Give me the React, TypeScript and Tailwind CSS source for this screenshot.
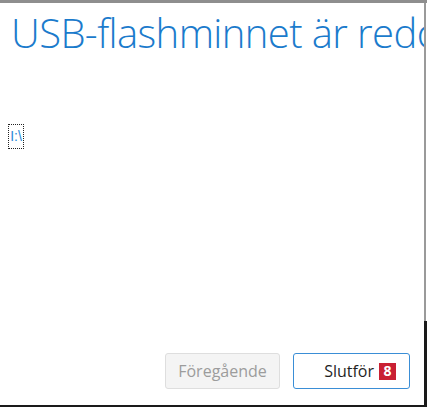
export default function App() {
  const font = { fontFamily: '"Segoe UI", "Open Sans", "Noto Sans", sans-serif' }
  return (
    <div className="w-[427px] h-[407px] bg-white flex flex-col overflow-hidden" style={font}>
      <div className="h-[3px] bg-[#8e8e8e] shrink-0" />
      <div className="flex flex-1 min-h-0">
        <div className="flex-1 min-w-0 flex flex-col overflow-hidden">
          <div className="pl-[11px] pt-[2px] whitespace-nowrap text-[40px] font-light leading-[56px] text-[#1b7bcc] tracking-[-0.6px]">
            USB-flashminnet är redo
          </div>
          <div className="pl-[8px] mt-[62px]">
            <div className="inline-flex items-center justify-center w-[16px] h-[25px] border border-dotted border-[#222] text-[14px] text-[#2a8ad8] leading-none" style={{ fontFamily: '"Liberation Sans", sans-serif' }}>
              I:\
            </div>
          </div>
          <div className="flex-1" />
          <div className="flex justify-end gap-[13px] pr-[14px] pb-[16px]">
            <button className="w-[115px] h-[36px] rounded-[3px] border border-[#dedede] bg-[#f4f4f4] text-[16px] text-[#9c9c9c]">
              Föregående
            </button>
            <button className="w-[117px] h-[36px] rounded-[3px] border-[1.5px] border-[#3a8ed6] bg-white text-[16px] text-[#1f1f1f] flex items-center justify-end pr-[13px] gap-[5px]">
              <span>Slutför</span>
              <span className="w-[17px] h-[17px] bg-[#c92033] text-white text-[14px] font-bold leading-none flex items-center justify-center">8</span>
            </button>
          </div>
        </div>
        <div className="w-[3px] shrink-0 flex flex-col">
          <div className="flex-1 bg-[#9a9a9a] w-[2px]" />
          <div className="h-[84px] bg-[#1a1a1a]" />
        </div>
      </div>
      <div className="h-[2px] bg-[#1a1a1a] shrink-0" />
    </div>
  )
}
